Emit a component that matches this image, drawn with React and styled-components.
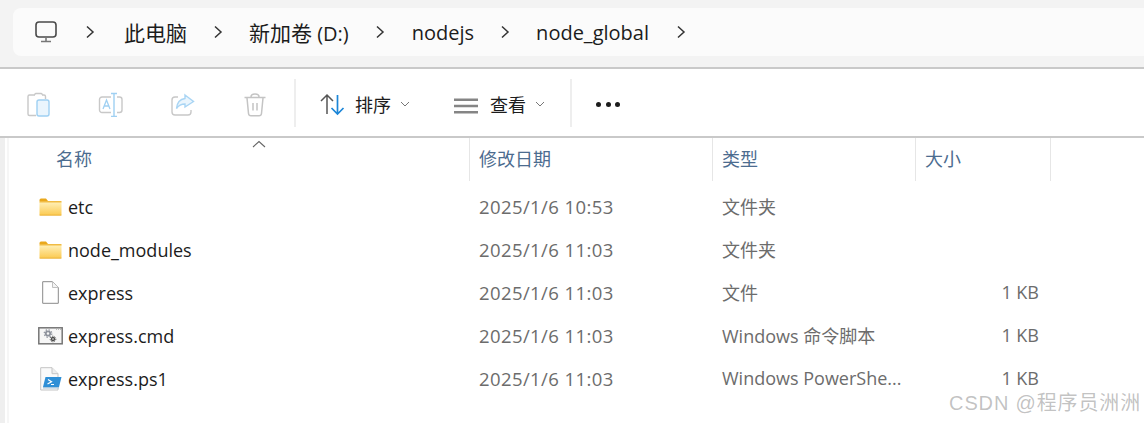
import styled, { createGlobalStyle } from "styled-components";

const Global = createGlobalStyle`
  html, body {
    margin: 0;
    padding: 0;
    background: #fff;
  }
`;

const FONT = `"Open Sans", "Noto Sans CJK SC", sans-serif`;

const Page = styled.div`
  width: 1144px;
  height: 423px;
  overflow: hidden;
  position: relative;
  background: #fff;
  font-family: ${FONT};
`;

const AddressArea = styled.div`
  height: 69px;
  box-sizing: border-box;
  padding: 8px 0 11px 13px;
  background: #f3f3f3;
  border-bottom: 2px solid #c9c9c9;
`;

const Breadcrumb = styled.div`
  height: 48px;
  background: #fbfbfb;
  border-radius: 8px 0 0 8px;
  display: flex;
  align-items: center;
  padding-left: 21px;
  color: #1c1c1c;
  font-size: 20px;
`;

const Crumb = styled.span`
  margin-left: ${(p) => p.$left}px;
  white-space: nowrap;
`;

const CjkText = styled.span`
  font-size: 21px;
`;

const Chevron = styled.svg`
  width: 10px;
  height: 14px;
  margin-left: ${(p) => p.$left}px;
  flex: none;
`;

const Toolbar = styled.div`
  height: 69px;
  box-sizing: border-box;
  background: #fff;
  border-bottom: 2px solid #c9c9c9;
  display: flex;
  align-items: center;
  padding: 3px 0 0 26px;
`;

const ToolIcon = styled.svg`
  width: 26px;
  height: 26px;
  margin-left: ${(p) => p.$left || 0}px;
  margin-right: ${(p) => p.$right || 0}px;
  flex: none;
`;

const Divider = styled.div`
  width: 2px;
  height: 48px;
  margin-top: -3px;
  background: #eeeeee;
  margin-left: ${(p) => p.$left}px;
  flex: none;
`;

const ToolLabel = styled.span`
  font-size: 18px;
  color: #1c1c1c;
  margin-left: ${(p) => p.$left}px;
  white-space: nowrap;
`;

const Caret = styled.svg`
  width: 10px;
  height: 6px;
  margin-left: 9px;
  flex: none;
`;

const Dots = styled.div`
  display: flex;
  gap: 4.5px;
  margin-left: 24px;
`;

const Dot = styled.span`
  width: 5px;
  height: 5px;
  border-radius: 50%;
  background: #1c1c1c;
`;

const Content = styled.div`
  display: flex;
  height: 285px;
`;

const Gutter = styled.div`
  width: 5px;
  background: #efefef;
  flex: none;
`;

const GutterEdge = styled.div`
  width: 2px;
  margin-left: 2px;
  background: #f6f6f6;
  flex: none;
`;

const Pane = styled.div`
  flex: 1;
  position: relative;
`;

const HeaderRow = styled.div`
  display: grid;
  grid-template-columns: 461px 243px 203px 135px;
  height: 42px;
`;

const HeaderCell = styled.div`
  color: #4c6c8f;
  font-size: 18px;
  line-height: 43px;
  padding-left: ${(p) => p.$pad || 9}px;
  border-right: 1px solid #e6e6e6;
  box-sizing: border-box;
`;

const SortArrow = styled.svg`
  position: absolute;
  left: 243px;
  top: 2px;
  width: 14px;
  height: 8px;
`;

const FileList = styled.div`
  display: flex;
  flex-direction: column;
  padding-top: 5px;
`;

const FileRow = styled.div`
  display: grid;
  grid-template-columns: 461px 243px 203px 135px;
  height: 43px;
  align-items: center;
  font-size: 18px;
  color: #6c6c6c;
`;

const NameCell = styled.div`
  display: flex;
  align-items: center;
  padding-left: 29px;
  color: #1c1c1c;
  font-size: 18px;
`;

const IconSlot = styled.div`
  width: 25px;
  height: 26px;
  margin-right: 5px;
  display: flex;
  align-items: center;
  justify-content: center;
  flex: none;
`;

const Cell = styled.div`
  padding-left: 9px;
  padding-bottom: 1px;
  white-space: nowrap;
`;

const DateCell = styled(Cell)`
  font-size: 18.5px;
  letter-spacing: 0.4px;
`;

const SizeCell = styled.div`
  text-align: right;
  padding-right: 12px;
  padding-bottom: 1px;
  white-space: nowrap;
`;

const Watermark = styled.div`
  position: absolute;
  right: 3px;
  bottom: 7px;
  font-size: 20px;
  letter-spacing: 0.85px;
  color: rgba(120, 120, 120, 0.45);
  font-family: "Liberation Sans", "Noto Sans CJK SC", sans-serif;
`;

const ChevronIcon = ({ left }) => (
  <Chevron $left={left} viewBox="0 0 10 14">
    <path d="M2 1.5 L8 7 L2 12.5" fill="none" stroke="#333" strokeWidth="1.5" />
  </Chevron>
);

const CaretIcon = () => (
  <Caret viewBox="0 0 10 6">
    <path d="M1 1 L5 5 L9 1" fill="none" stroke="#777" strokeWidth="1" />
  </Caret>
);

const Folder = () => (
  <svg width="23" height="18" viewBox="0 0 23 18">
    <defs>
      <linearGradient id="folderFill" x1="0" y1="0" x2="0" y2="1">
        <stop offset="0" stopColor="#fff0b8" />
        <stop offset="1" stopColor="#fbc94f" />
      </linearGradient>
    </defs>
    <path d="M0.5 2 a1.5 1.5 0 0 1 1.5-1.5 H7 L9 3 H0.5 Z" fill="#e9a81c" />
    <path d="M0.5 4 H22.5 V16.5 a1 1 0 0 1-1 1 H1.5 a1 1 0 0 1-1-1 Z" fill="url(#folderFill)" />
    <path d="M0.5 16.7 H22.5 V17.5 H0.5 Z" fill="#e6ad35" />
    <path d="M9 3 H22.5 V4.5 H0.5 V3 Z" fill="#f0bb43" />
  </svg>
);

const BlankFile = () => (
  <svg width="17" height="23" viewBox="0 0 17 23">
    <path d="M0.7 0.7 H10.5 L16.3 6.5 V22.3 H0.7 Z" fill="#fff" stroke="#8a8a8a" />
    <path d="M10.5 0.7 V6.5 H16.3" fill="#f4f4f4" stroke="#c0c0c0" />
  </svg>
);

const CmdFile = () => (
  <svg width="25" height="18" viewBox="0 0 25 18">
    <rect x="0.8" y="0.8" width="23.4" height="16" fill="#f6f6f6" stroke="#767676" strokeWidth="1.5" />
    <path d="M18 2.5 H23 " stroke="#bbb" strokeDasharray="1 1" />
    <circle cx="10" cy="6.5" r="2.2" fill="none" stroke="#8d929c" strokeWidth="1.8" />
    <circle cx="10" cy="6.5" r="3.8" fill="none" stroke="#8d929c" strokeWidth="1.2" strokeDasharray="1.4 1.6" />
    <circle cx="15" cy="12" r="1.5" fill="none" stroke="#4d4d4d" strokeWidth="1.4" />
    <circle cx="15" cy="12" r="2.8" fill="none" stroke="#4d4d4d" strokeWidth="1" strokeDasharray="1.2 1.2" />
  </svg>
);

const PsFile = () => (
  <svg width="22" height="24" viewBox="0 0 22 24">
    <path d="M0.7 0.7 H12 L18 6.7 V23 H0.7 Z" fill="#fafafa" stroke="#c4c4c4" />
    <path d="M12 0.7 V6.7 H18" fill="#eee" stroke="#c4c4c4" />
    <path d="M5.5 10 H21.5 L19 20 H3 Z" fill="#2f8fd6" />
    <path d="M8 12.5 L11.5 14.8 L7.5 17" fill="none" stroke="#fff" strokeWidth="1.2" />
    <path d="M11 17.5 H14" stroke="#fff" strokeWidth="1" />
    <path d="M3 20 H19 V21.5 H3 Z" fill="#a9c7dd" />
  </svg>
);

const files = [
  { name: "etc", date: "2025/1/6 10:53", type: "文件夹", size: "", icon: <Folder /> },
  { name: "node_modules", date: "2025/1/6 11:03", type: "文件夹", size: "", icon: <Folder /> },
  { name: "express", date: "2025/1/6 11:03", type: "文件", size: "1 KB", icon: <BlankFile /> },
  { name: "express.cmd", date: "2025/1/6 11:03", type: "Windows 命令脚本", size: "1 KB", icon: <CmdFile /> },
  { name: "express.ps1", date: "2025/1/6 11:03", type: "Windows PowerShe...", size: "1 KB", icon: <PsFile /> },
];

const App = () => {
  return (
    <Page>
      <Global />
      <AddressArea>
        <Breadcrumb>
          <svg width="24" height="23" viewBox="0 0 24 23" style={{ flex: "none" }}>
            <rect x="2" y="1" width="20" height="15" rx="3" fill="none" stroke="#4a4a4a" strokeWidth="1.6" />
            <path d="M12 16 V20 M7 20.5 H17" fill="none" stroke="#777" strokeWidth="1.6" />
          </svg>
          <ChevronIcon left={27} />
          <Crumb $left={29}><CjkText>此电脑</CjkText></Crumb>
          <ChevronIcon left={26} />
          <Crumb $left={26}><CjkText>新加卷</CjkText> (D:)</Crumb>
          <ChevronIcon left={26} />
          <Crumb $left={27}>nodejs</Crumb>
          <ChevronIcon left={26} />
          <Crumb $left={26}>node_global</Crumb>
          <ChevronIcon left={27} />
        </Breadcrumb>
      </AddressArea>
      <Toolbar>
        <ToolIcon $right={46} viewBox="0 0 26 26">
          <path d="M9 4 H3.5 a1.5 1.5 0 0 0-1.5 1.5 V23 a1.5 1.5 0 0 0 1.5 1.5 H10" fill="none" stroke="#c8c8c8" strokeWidth="1.4" />
          <path d="M9 4 a1 1 0 0 1 1-1.5 H15 a1 1 0 0 1 1 1.5" fill="none" stroke="#c8c8c8" strokeWidth="1.4" />
          <path d="M16 4 H18 a1.5 1.5 0 0 1 1.5 1.5 V8" fill="none" stroke="#c8c8c8" strokeWidth="1.4" />
          <rect x="11" y="9" width="12" height="16" rx="2" fill="#eaf5fd" stroke="#9fd0f2" strokeWidth="1.4" />
        </ToolIcon>
        <ToolIcon $right={46} viewBox="0 0 26 26">
          <path d="M13 6 H4 a2.5 2.5 0 0 0-2.5 2.5 V19 a2.5 2.5 0 0 0 2.5 2.5 H13" fill="none" stroke="#c8c8c8" strokeWidth="1.4" />
          <path d="M19 6 H21.5 a2.5 2.5 0 0 1 2.5 2.5 V19 a2.5 2.5 0 0 1-2.5 2.5 H19" fill="none" stroke="#c8c8c8" strokeWidth="1.4" />
          <path d="M13 2.5 H19 M16 2.5 V25.5 M13 25.5 H19" fill="none" stroke="#9fd0f2" strokeWidth="1.4" />
          <path d="M5 18 L8.5 9 L12 18 M6.3 15 H10.7" fill="none" stroke="#9fd0f2" strokeWidth="1.3" />
        </ToolIcon>
        <ToolIcon $right={46} viewBox="0 0 26 26">
          <path d="M8 6 H5 a3 3 0 0 0-3 3 V21 a3 3 0 0 0 3 3 H18 a3 3 0 0 0 3-3 V19" fill="none" stroke="#c8c8c8" strokeWidth="1.4" />
          <path d="M15 4 L23.5 10.5 L15 16 V13 C11 13 8.5 14.5 6.5 17.5 C7 12 10 8.2 15 7.5 Z" fill="#eaf5fd" stroke="#a9d5f4" strokeWidth="1.4" />
        </ToolIcon>
        <ToolIcon viewBox="0 0 26 26">
          <path d="M2.5 6.5 H23.5 M9 6 C9 4 10 3 13 3 C16 3 17 4 17 6" fill="none" stroke="#c4c4c4" strokeWidth="1.5" />
          <path d="M5 7 L6.5 22.5 a2.5 2.5 0 0 0 2.5 2.2 H17 a2.5 2.5 0 0 0 2.5-2.2 L21 7" fill="none" stroke="#c4c4c4" strokeWidth="1.5" />
          <path d="M11 12 V19.5 M15 12 V19.5" fill="none" stroke="#c4c4c4" strokeWidth="1.5" />
        </ToolIcon>
        <Divider $left={26} />
        <ToolIcon $left={23} viewBox="0 0 26 26">
          <path d="M2 10 L8 4 L14 10 M8 4 V23" fill="none" stroke="#555" strokeWidth="1.5" />
          <path d="M12.5 17 L18.5 23 L24.5 17 M18.5 4 V23" fill="none" stroke="#1c86d8" strokeWidth="1.7" />
        </ToolIcon>
        <ToolLabel $left={10}>排序</ToolLabel>
        <CaretIcon />
        <ToolIcon $left={43} viewBox="0 0 26 26">
          <path d="M1 8.8 H25 M1 15 H25 M1 21.2 H25" fill="none" stroke="#858585" strokeWidth="2.6" />
        </ToolIcon>
        <ToolLabel $left={11}>查看</ToolLabel>
        <CaretIcon />
        <Divider $left={25} />
        <Dots>
          <Dot />
          <Dot />
          <Dot />
        </Dots>
      </Toolbar>
      <Content>
        <Gutter />
        <GutterEdge />
        <Pane>
          <SortArrow viewBox="0 0 14 8">
            <path d="M1 7 L7 1.5 L13 7" fill="none" stroke="#666" strokeWidth="1.1" />
          </SortArrow>
          <HeaderRow>
            <HeaderCell $pad={47}>名称</HeaderCell>
            <HeaderCell>修改日期</HeaderCell>
            <HeaderCell>类型</HeaderCell>
            <HeaderCell>大小</HeaderCell>
          </HeaderRow>
          <FileList>
            {files.map((f) => (
              <FileRow key={f.name}>
                <NameCell>
                  <IconSlot>{f.icon}</IconSlot>
                  {f.name}
                </NameCell>
                <DateCell>{f.date}</DateCell>
                <Cell>{f.type}</Cell>
                <SizeCell>{f.size}</SizeCell>
              </FileRow>
            ))}
          </FileList>
          <Watermark>CSDN @程序员洲洲</Watermark>
        </Pane>
      </Content>
    </Page>
  );
};

export default App;
